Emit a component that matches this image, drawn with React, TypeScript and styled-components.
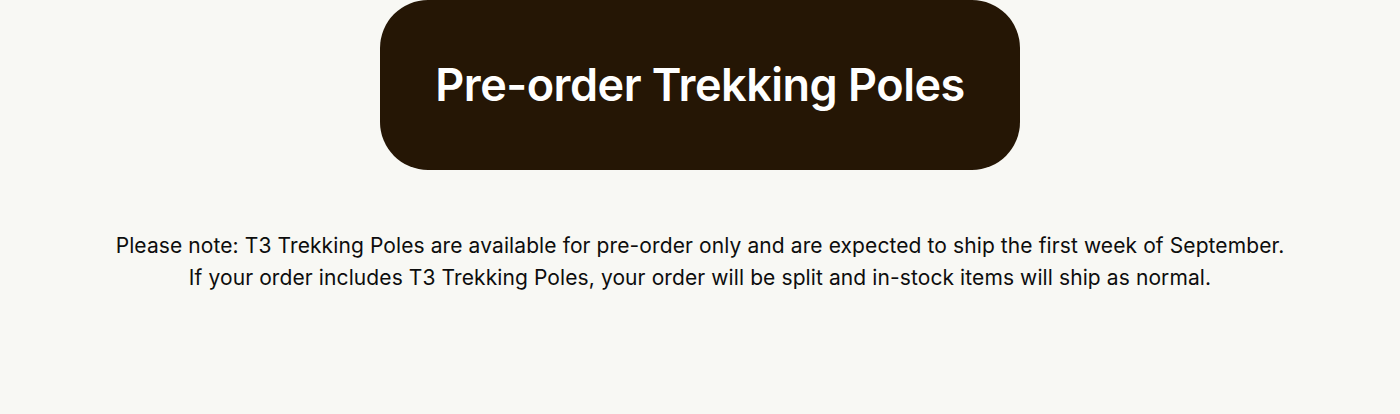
import React from 'react';
import styled, { createGlobalStyle } from 'styled-components';

const GlobalStyle = createGlobalStyle`
  html, body {
    margin: 0;
    padding: 0;
    background: #f8f8f4;
  }

  body {
    font-family: Inter, 'Liberation Sans', sans-serif;
    color: #0d0d0d;
  }
`;

const Section = styled.section`
  display: flex;
  flex-direction: column;
  align-items: center;
  min-height: 414px;
  box-sizing: border-box;
`;

const PreorderButton = styled.button`
  display: flex;
  align-items: center;
  justify-content: center;
  width: 640px;
  height: 170px;
  border: 0;
  border-radius: 48px;
  background: #251605;
  color: #fff;
  font-family: Inter, 'Liberation Sans', sans-serif;
  font-size: 45px;
  font-weight: 600;
  letter-spacing: -0.5px;
  cursor: pointer;
  padding: 0 0 2px;
`;

const Note = styled.p`
  margin: 60px 0 0;
  text-align: center;
  font-size: 21px;
  line-height: 32px;
  letter-spacing: 0.1px;
`;

const App: React.FC = () => (
  <>
    <GlobalStyle />
    <Section>
      <PreorderButton>Pre-order Trekking Poles</PreorderButton>
      <Note>
        Please note: T3 Trekking Poles are available for pre-order only and are expected to ship the first week of September.
        <br />
        If your order includes T3 Trekking Poles, your order will be split and in-stock items will ship as normal.
      </Note>
    </Section>
  </>
);

export default App;
